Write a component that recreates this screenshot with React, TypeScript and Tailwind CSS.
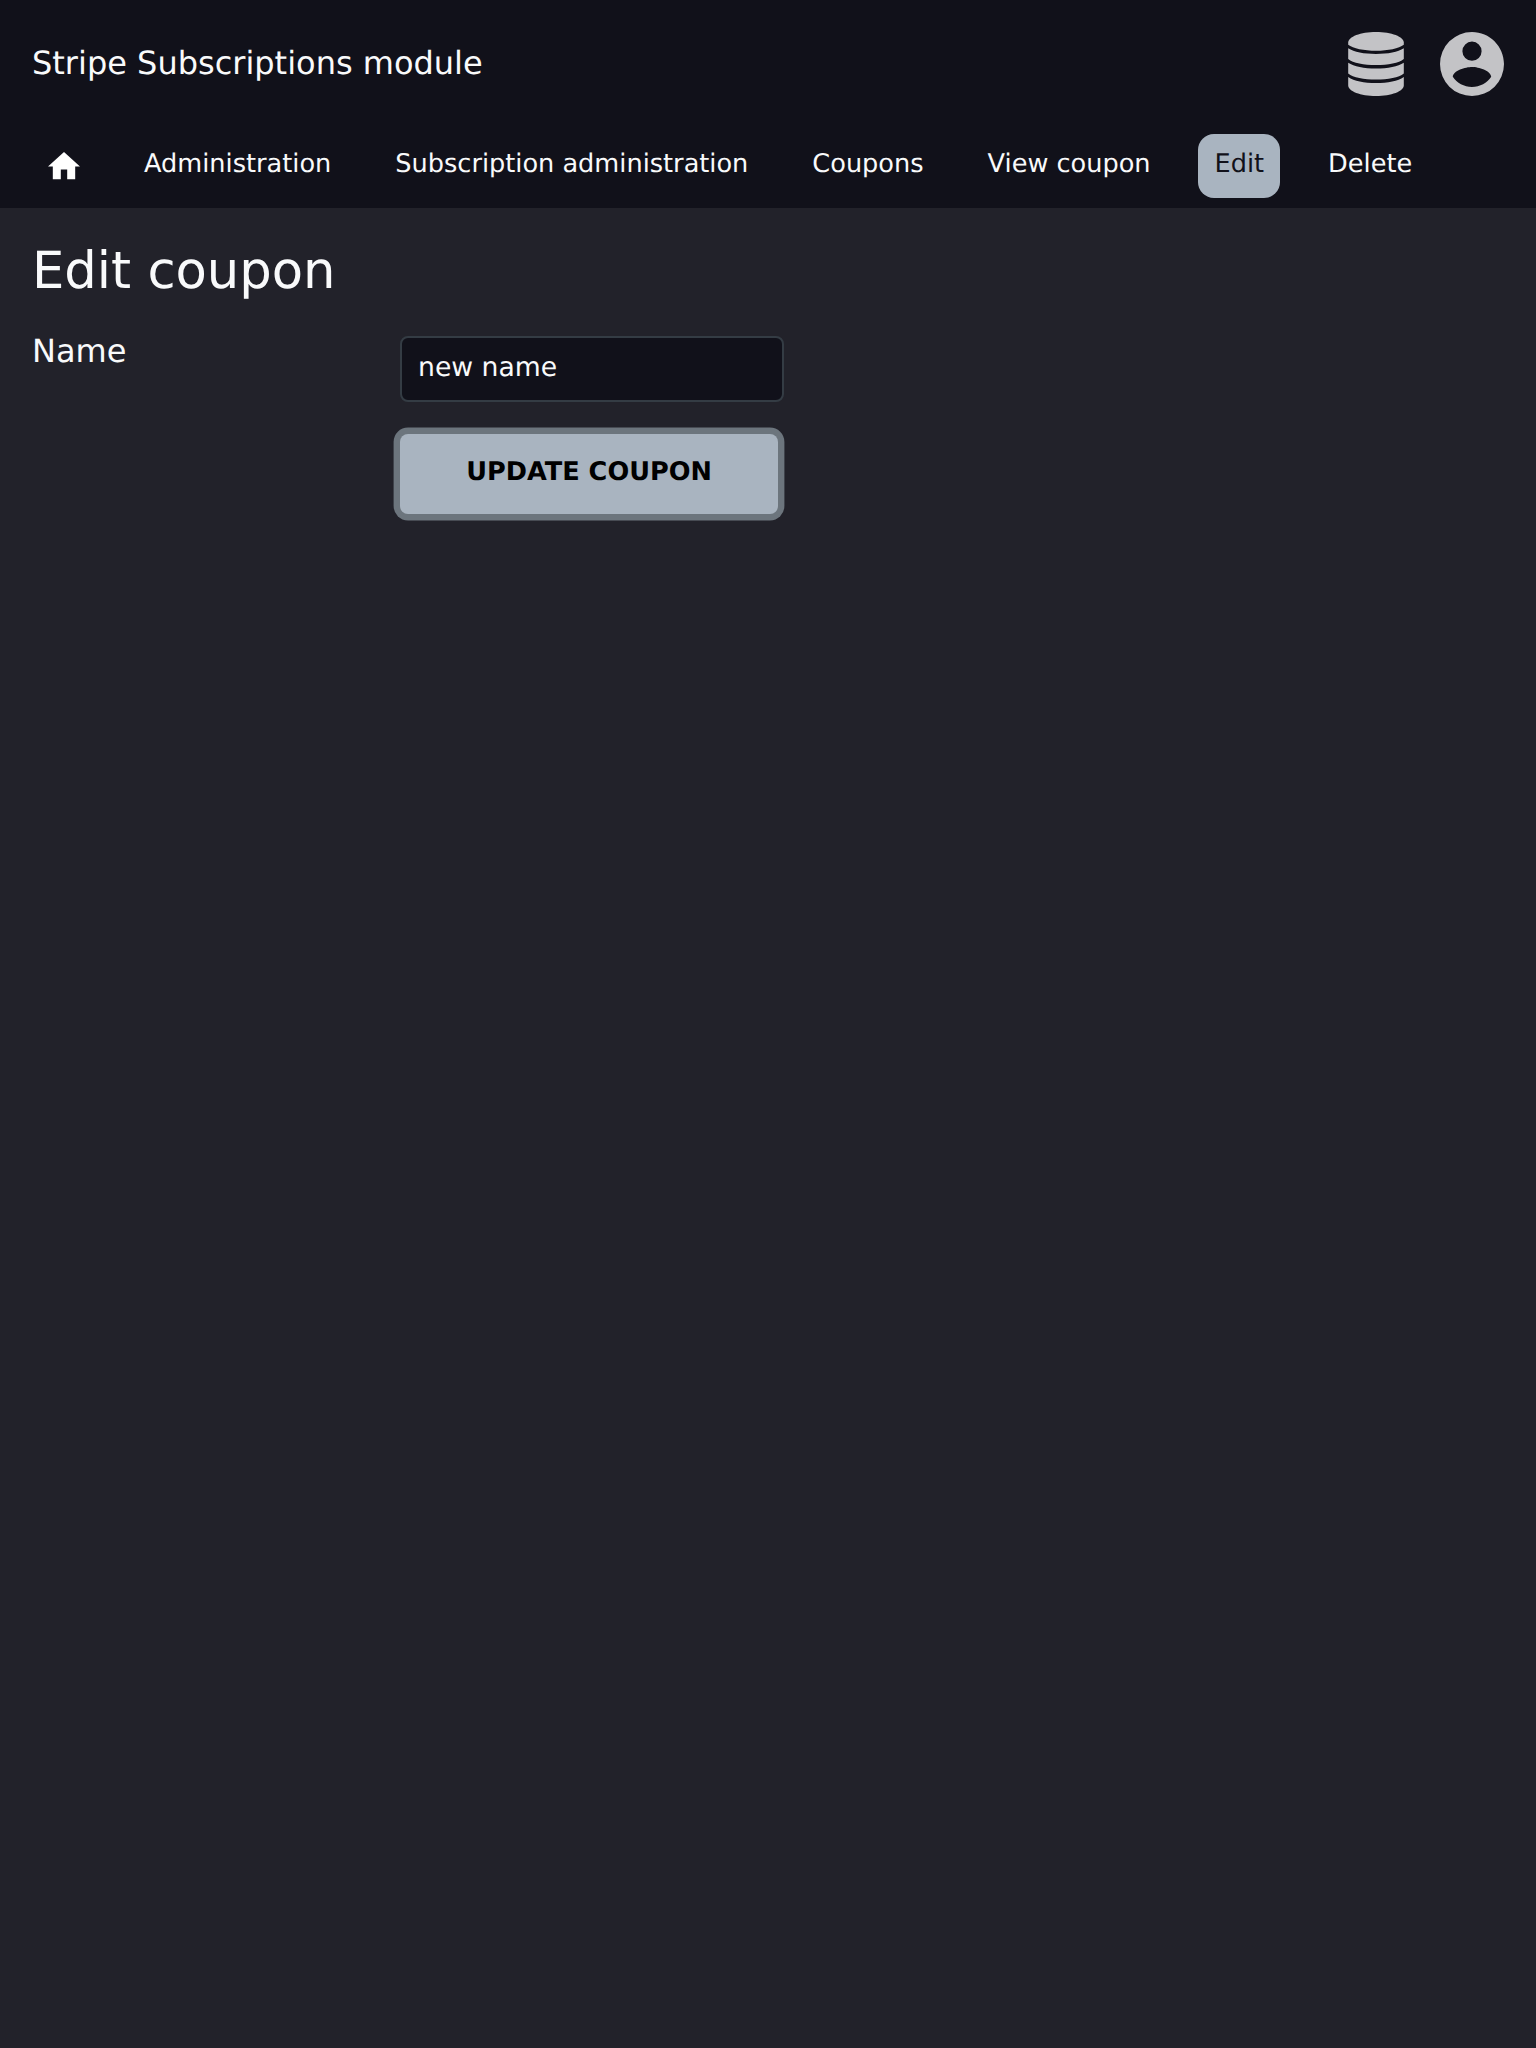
const links = [
  { label: 'Administration' },
  { label: 'Subscription administration' },
  { label: 'Coupons' },
  { label: 'View coupon' },
  { label: 'Edit', active: true },
  { label: 'Delete' },
];

function DatabaseIcon() {
  return (
    <svg className="h-16 w-14" viewBox="0 0 56 64" fill="#c3c3c6">
      <path d="M0.200 10.500C0.200 4.700 12.500 0 28 0S55.800 4.700 55.800 10.500V12.700C51 16.500 40 18.700 28 18.700S5 16.500 0.200 12.700Z" />
      <path d="M0.200 16.300C6 20 16 22 28 22S50 20 55.800 16.300V27C51 31 40 33.100 28 33.100S5 31 0.200 27Z" />
      <path d="M0.200 30.700C6 34.500 16 36.500 28 36.500S50 34.500 55.800 30.700V41.500C51 45.500 40 47.600 28 47.600S5 45.500 0.200 41.500Z" />
      <path d="M0.200 45C6 49 16 51 28 51S50 49 55.800 45V53.500C55.800 59.300 43.500 64 28 64S0.200 59.300 0.200 53.500Z" />
    </svg>
  );
}

function AccountIcon() {
  return (
    <svg className="h-16 w-16" viewBox="2 2 20 20" fill="#c3c3c6">
      <path d="M12 19.200C9.500 19.200 7.290 17.920 6 16C6.030 14 10 12.900 12 12.900C14 12.900 17.970 14 18 16C16.710 17.920 14.500 19.200 12 19.200M12 5A3 3 0 0 1 15 8A3 3 0 0 1 12 11A3 3 0 0 1 9 8A3 3 0 0 1 12 5M12 2A10 10 0 0 0 2 12A10 10 0 0 0 12 22A10 10 0 0 0 22 12C22 6.470 17.500 2 12 2Z" />
    </svg>
  );
}

function HomeIcon() {
  return (
    <svg className="h-[27.2px] w-8" viewBox="2 3 20 17" fill="#fff">
      <path d="M10 20v-6h4v6h5v-8h3L12 3 2 12h3v8z" />
    </svg>
  );
}

export default function App() {
  return (
    <div className="min-h-screen bg-[#22222a] font-['DejaVu_Sans',sans-serif] text-[#f9fafb] [text-rendering:geometricPrecision]">
      <header className="h-52 bg-[#11111a]">
        <div className="flex h-32 items-center justify-between px-8">
          <div className="pb-0.5 text-[32px] leading-[62px]">Stripe Subscriptions module</div>
          <div className="flex gap-9">
            <DatabaseIcon />
            <AccountIcon />
          </div>
        </div>
        <nav className="flex gap-8 px-8 pt-1.5">
          <a className="flex h-16 w-16 items-center justify-center">
            <HomeIcon />
          </a>
          {links.map((link) => (
            <a
              key={link.label}
              className={
                link.active
                  ? '-ml-px h-16 rounded-2xl bg-[#a9b4c0] pr-4 pl-[17px] text-[25.6px] leading-[60px] whitespace-nowrap text-[#11111a]'
                  : 'h-16 px-4 text-[25.6px] leading-[60px] whitespace-nowrap'
              }
            >
              {link.label}
            </a>
          ))}
        </nav>
      </header>
      <main className="px-8 pt-8">
        <h1 className="text-[51.2px] leading-[62px]">Edit coupon</h1>
        <form className="mt-[34px] flex">
          <label className="w-[368px] text-[32px] leading-[30px]">Name</label>
          <div className="w-[384px]">
            <input
              className="block h-[66px] w-full rounded-lg border-2 border-[#343c44] bg-[#11111a] px-4 pb-[3px] text-[26.667px] outline-none [text-rendering:geometricPrecision]"
              defaultValue="new name"
            />
            <button
              type="button"
              className="mt-8 block h-20 w-[378px] rounded-lg bg-[#a9b4c0] pb-[3px] text-[25.6px] font-bold text-black ring-[6.4px] ring-[#6c757d] [text-rendering:geometricPrecision]"
            >
              UPDATE COUPON
            </button>
          </div>
        </form>
      </main>
    </div>
  );
}
